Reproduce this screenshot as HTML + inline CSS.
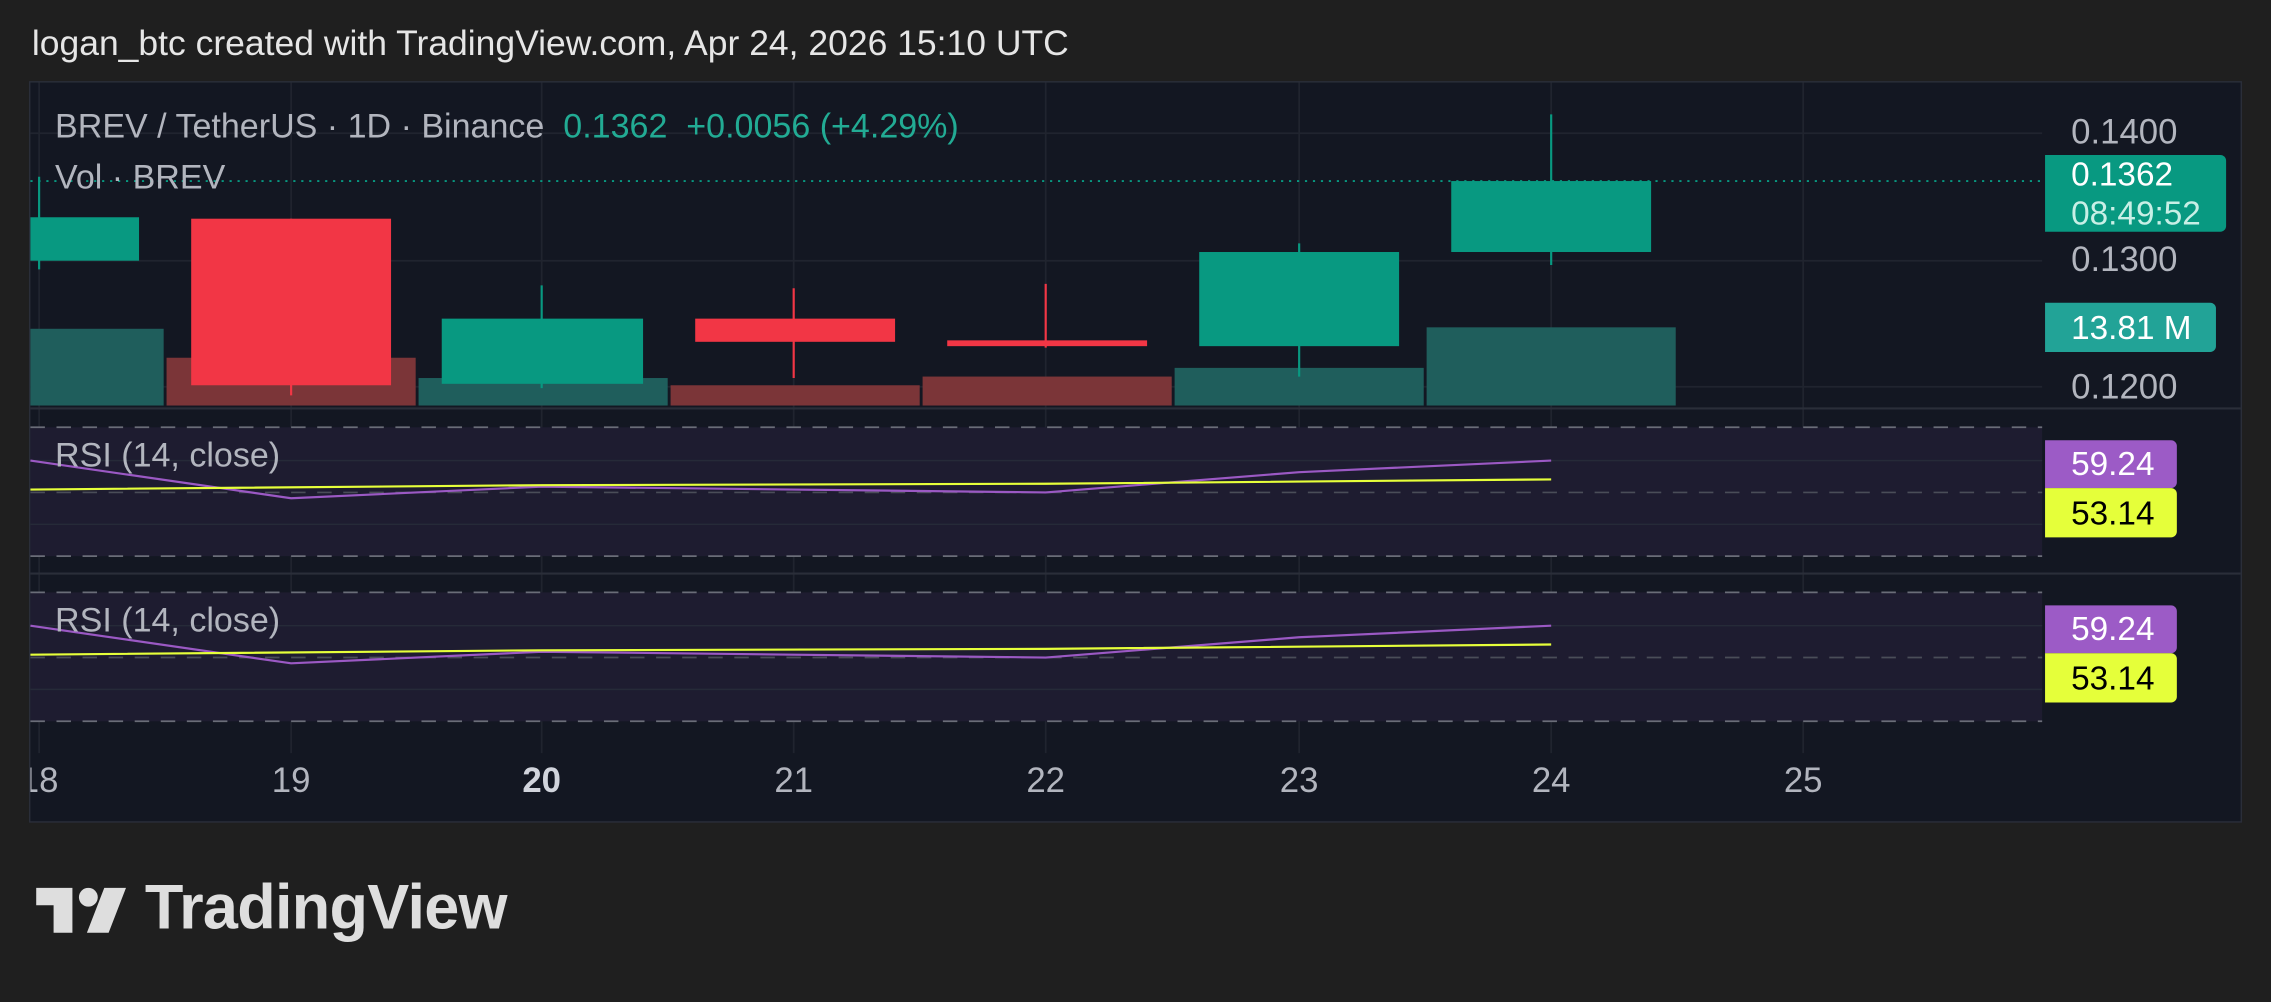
<!DOCTYPE html>
<html><head><meta charset="utf-8"><style>
html,body{margin:0;padding:0;background:#1f1f1f;overflow:hidden;width:2271px;height:1002px}
#w{position:absolute;left:0;top:0;width:1568px;height:692px;transform:scale(1.44834);transform-origin:0 0;font-family:"Liberation Sans",sans-serif}
.a{position:absolute}
.t{position:absolute;width:60px;text-align:center}
.lb{position:absolute;left:1412px;border-radius:0 4px 4px 0;font-size:23px;padding-left:18px;box-sizing:border-box}
</style></head><body><div id="w">
<div class="a" style="left:22px;top:17px;font-size:24.5px;color:#e6e6e6;white-space:nowrap">logan_btc created with TradingView.com, Apr 24, 2026 15:10 UTC</div>
<svg class="a" style="left:0;top:0" width="1568" height="692" viewBox="0 0 1568 692">
<rect x="20.5" y="56.5" width="1527" height="511" fill="#131722" stroke="#2a2e39"/>
<g stroke="#20242f" stroke-width="1.2">
<line x1="27" y1="57" x2="27" y2="520"/><line x1="201" y1="57" x2="201" y2="520"/><line x1="374" y1="57" x2="374" y2="520"/><line x1="548" y1="57" x2="548" y2="520"/><line x1="722" y1="57" x2="722" y2="520"/><line x1="897" y1="57" x2="897" y2="520"/><line x1="1071" y1="57" x2="1071" y2="520"/><line x1="1245" y1="57" x2="1245" y2="520"/>
<line x1="21" y1="92" x2="1410" y2="92"/><line x1="21" y1="180" x2="1410" y2="180"/><line x1="21" y1="267" x2="1410" y2="267"/>
</g>
<g>
<rect x="21" y="227" width="92" height="53" fill="#1f5e5c"/>
<rect x="115" y="247" width="172" height="33" fill="#7b3538"/>
<rect x="289" y="261" width="172" height="19" fill="#1f5e5c"/>
<rect x="463" y="266" width="172" height="14" fill="#7b3538"/>
<rect x="637" y="260" width="172" height="20" fill="#7b3538"/>
<rect x="811" y="254" width="172" height="26" fill="#1f5e5c"/>
<rect x="985" y="226" width="172" height="54" fill="#1f5e5c"/>
</g>
<g>
<line x1="27" y1="122" x2="27" y2="186" stroke="#089981" stroke-width="1.5"/><rect x="21" y="150" width="75" height="30" fill="#089981"/>
<line x1="201" y1="151" x2="201" y2="273" stroke="#f23645" stroke-width="1.5"/><rect x="132" y="151" width="138" height="115" fill="#f23645"/>
<line x1="374" y1="197" x2="374" y2="268" stroke="#089981" stroke-width="1.5"/><rect x="305" y="220" width="139" height="45" fill="#089981"/>
<line x1="548" y1="199" x2="548" y2="261" stroke="#f23645" stroke-width="1.5"/><rect x="480" y="220" width="138" height="16" fill="#f23645"/>
<line x1="722" y1="196" x2="722" y2="240" stroke="#f23645" stroke-width="1.5"/><rect x="654" y="235" width="138" height="4" fill="#f23645"/>
<line x1="897" y1="168" x2="897" y2="260" stroke="#089981" stroke-width="1.5"/><rect x="828" y="174" width="138" height="65" fill="#089981"/>
<line x1="1071" y1="79" x2="1071" y2="183" stroke="#089981" stroke-width="1.5"/><rect x="1002" y="125" width="138" height="49" fill="#089981"/>
</g>
<line x1="21" y1="125" x2="1410" y2="125" stroke="#089981" stroke-width="1.3" stroke-dasharray="1.5 4"/>
<line x1="21" y1="282" x2="1547" y2="282" stroke="#2a2e39" stroke-width="1.5"/>
<line x1="21" y1="396" x2="1547" y2="396" stroke="#2a2e39" stroke-width="1.5"/>
<g id="r1">
<rect x="21" y="295" width="1389" height="89" fill="#1e1c30"/>
<line x1="21" y1="318" x2="1410" y2="318" stroke="#262a38"/><line x1="21" y1="362" x2="1410" y2="362" stroke="#262a38"/>
<g stroke="#6a6d78" stroke-width="1.2" stroke-dasharray="10 8"><line x1="21" y1="295" x2="1410" y2="295"/><line x1="21" y1="340" x2="1410" y2="340" stroke="#4a4d58"/><line x1="21" y1="384" x2="1410" y2="384"/></g>
<polyline points="21,318 201,344 374,336 548,338 722,340 897,326 1071,318" fill="none" stroke="#9b59c4" stroke-width="1.5"/>
<polyline points="21,338 374,335 722,334 1071,331" fill="none" stroke="#e6ff3a" stroke-width="1.5"/>
</g>
<use href="#r1" transform="translate(0,114)"/>
<g fill="#dedede">
<path d="M25 613H50V644H37V625H25Z"/><circle cx="61" cy="619.5" r="6.5"/><path d="M72 613H87L75 644H60Z"/>
</g>
</svg>
<div class="a" style="left:38px;top:74px;font-size:23.5px;color:#b2b5be;white-space:nowrap">BREV / TetherUS · 1D · Binance&nbsp; <span style="color:#22ab94">0.1362&nbsp; +0.0056 (+4.29%)</span></div>
<div class="a" style="left:38px;top:109px;font-size:23.5px;color:#b2b5be">Vol · BREV</div>
<div class="a" style="left:38px;top:301px;font-size:23.5px;color:#b2b5be">RSI (14, close)</div>
<div class="a" style="left:38px;top:415px;font-size:23.5px;color:#b2b5be">RSI (14, close)</div>
<div class="a" style="left:1430px;top:78px;font-size:24px;color:#b2b5be">0.1400</div>
<div class="a" style="left:1430px;top:166px;font-size:24px;color:#b2b5be">0.1300</div>
<div class="a" style="left:1430px;top:254px;font-size:24px;color:#b2b5be">0.1200</div>
<div class="lb" style="top:107px;width:125px;height:53px;background:#089981;color:#fff;line-height:27px;font-size:23px">0.1362<br><span style="color:#c8efe6">08:49:52</span></div>
<div class="lb" style="top:209px;width:118px;height:34px;background:#22a397;color:#fff;line-height:34px">13.81 M</div>
<div class="lb" style="top:304px;width:91px;height:33px;background:#9c5bc6;color:#fff;line-height:33px">59.24</div>
<div class="lb" style="top:337px;width:91px;height:34px;background:#e5ff3a;color:#000;line-height:34px">53.14</div>
<div class="lb" style="top:418px;width:91px;height:33px;background:#9c5bc6;color:#fff;line-height:33px">59.24</div>
<div class="lb" style="top:451px;width:91px;height:34px;background:#e5ff3a;color:#000;line-height:34px">53.14</div>
<div class="a" style="left:21px;top:526px;width:1520px;height:30px;overflow:hidden;font-size:24px;color:#b2b5be">
<span class="t" style="left:-24px">18</span><span class="t" style="left:150px">19</span><span class="t" style="left:323px;font-weight:bold;color:#d1d4dc">20</span><span class="t" style="left:497px">21</span><span class="t" style="left:671px">22</span><span class="t" style="left:846px">23</span><span class="t" style="left:1020px">24</span><span class="t" style="left:1194px">25</span></div>
<div class="a" style="left:100px;top:603px;font-size:43.5px;font-weight:bold;color:#dedede;letter-spacing:-0.5px">TradingView</div>
</div></body></html>
